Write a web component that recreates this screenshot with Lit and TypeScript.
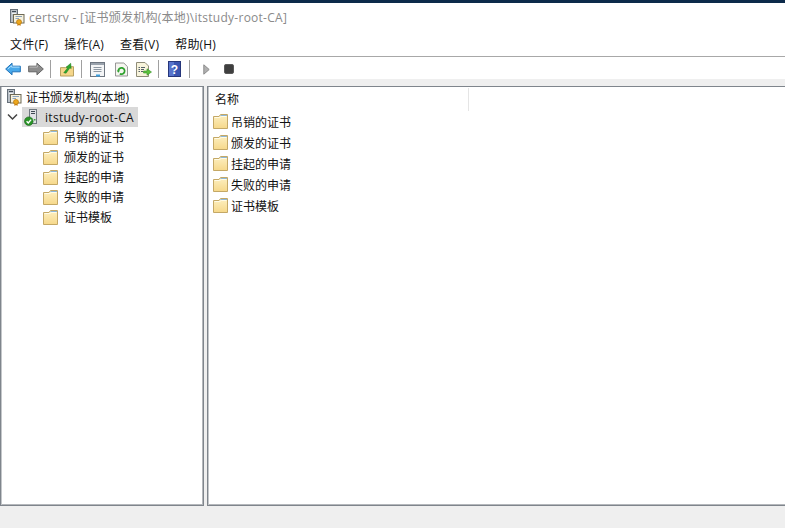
import { LitElement, html, css } from "lit";
import { customElement } from "lit/decorators.js";

const folder = html`<svg class="ic" width="15" height="15" viewBox="0 0 15 15">
  <defs><linearGradient id="fg" x1="0" y1="0" x2="0" y2="1"><stop offset="0" stop-color="#fdf0c2"/><stop offset="1" stop-color="#f6d88a"/></linearGradient></defs>
  <path d="M.5 2.5V14.5H14.5V.5H7.5L6 2.5Z" fill="url(#fg)" stroke="#c4a866"/>
  <path d="M7.5 1.5H14" stroke="#8fb8d8"/>
  <path d="M1.5 3.5H6.8L8.2 2.5H13.5" fill="none" stroke="#fffbe6"/>
</svg>`;

const cert = html`<svg class="ic" width="16" height="17" viewBox="0 0 16 17">
  <rect x="1.5" y="0.5" width="7" height="13" fill="#b9c0c7" stroke="#66707a"/>
  <rect x="3" y="2" width="4" height="1" fill="#3f4b56"/>
  <rect x="3" y="4" width="4" height="1" fill="#eef1f3"/>
  <rect x="4.5" y="5.5" width="10.5" height="8.5" fill="#f6f1de" stroke="#6e6a56"/>
  <path d="M6.5 7.5H13M6.5 9.5H10" stroke="#8aa3bb"/>
  <path d="M8.6 14.5l-.2 2.4 1.6-1 1.6 1-.2-2.4" fill="#c67a0c"/>
  <circle cx="10" cy="13" r="2.5" fill="#eda81e" stroke="#b87408" stroke-width=".7"/>
</svg>`;

const server = html`<svg class="ic" width="16" height="17" viewBox="0 0 16 17">
  <rect x="5.5" y="0.5" width="7" height="14" fill="#e0e3e6" stroke="#6f7880"/>
  <rect x="7" y="2" width="4" height="1" fill="#3f4a54"/>
  <rect x="7" y="4" width="4" height="1" fill="#3f4a54"/>
  <rect x="10" y="10" width="1.5" height="1.5" fill="#3da63d"/>
  <circle cx="4.8" cy="12.2" r="4.3" fill="#2a9428" stroke="#1a641a" stroke-width=".6"/>
  <path d="M2.6 12.2l1.7 1.8 2.8-3.4" fill="none" stroke="#fff" stroke-width="1.4"/>
</svg>`;

const tb = {
  back: html`<svg width="16" height="14" viewBox="0 0 17 14"><path d="M.7 7 7.5.8V4H16.3V10H7.5V13.2Z" fill="#48a8ea" stroke="#1b6eb4"/><path d="M3 7 7 3.5V5H15.5" fill="none" stroke="#b4e2ff"/></svg>`,
  fwd: html`<svg width="16" height="14" viewBox="0 0 17 14"><path d="M16.3 7 9.5.8V4H.7V10H9.5V13.2Z" fill="#8d8d8d" stroke="#5e5e5e"/><path d="M1.5 5H10V3" fill="none" stroke="#bdbdbd"/></svg>`,
  up: html`<svg width="14" height="15" viewBox="0 0 15 15"><path d="M.5 5.5H6L7 4.5H14.5V14.5H.5Z" fill="#f5d68a" stroke="#b39a58"/><path d="M4 11 8 6l-1.5-.8L11.5.8 12 6.5 10.5 5.8 6.5 11.5Z" fill="#2fa62f" stroke="#1c7a1c" stroke-width=".5"/></svg>`,
  panel: html`<svg width="15" height="15" viewBox="0 0 15 15"><rect x=".5" y=".5" width="14" height="14" fill="#f4f5f6" stroke="#6e7680"/><rect x="1" y="1" width="13" height="2" fill="#9aa3ad"/><path d="M3.5 5.5H11.5M3.5 7.5H11.5M3.5 9.5H11.5" stroke="#8d98a3"/><rect x="6" y="12.5" width="4" height="2" fill="#3da0e0"/></svg>`,
  refresh: html`<svg width="13" height="15" viewBox="0 0 14 15"><path d="M.5.5H9.5L13.5 4.5V14.5H.5Z" fill="#f6f6f0" stroke="#8a8a8a"/><path d="M3.6 9a3.4 3.4 0 1 1 1.6 3" fill="none" stroke="#2ea12e" stroke-width="1.8"/><path d="M1.8 8.5h3.6L3.6 11Z" fill="#2ea12e"/></svg>`,
  export: html`<svg width="16" height="15" viewBox="0 0 16 15"><path d="M.5.5H9L12.5 4V14.5H.5Z" fill="#f8f4dc" stroke="#8f8c78"/><path d="M2.5 5.5H4M5 5.5H9M2.5 7.5H4M5 7.5H8M2.5 9.5H4M5 9.5H7" stroke="#55606a"/><path d="M7.5 9H11V6.8L15.5 10 11 13.2V11H7.5Z" fill="#5cc23c" stroke="#3b922a" stroke-width=".6"/></svg>`,
  help: html`<svg width="13" height="16" viewBox="0 0 13 16"><rect x=".5" y=".5" width="12" height="15" fill="#3a55b0" stroke="#26367a"/><rect x="1" y="1" width="5" height="14" fill="#5874cc"/><text x="6.5" y="12.5" text-anchor="middle" font-family="Liberation Sans" font-size="12" font-weight="700" fill="#fff">?</text></svg>`,
  play: html`<svg width="7" height="11" viewBox="0 0 7 11"><path d="M.8.8 6.2 5.5.8 10.2Z" fill="#b0b0b0" stroke="#8c8c8c"/></svg>`,
  stop: html`<svg width="10" height="10" viewBox="0 0 10 10"><rect x=".5" y=".5" width="9" height="9" rx="1.4" fill="#3f3f3f" stroke="#5a5a5a"/></svg>`,
};

const items = ["吊销的证书", "颁发的证书", "挂起的申请", "失败的申请", "证书模板"];
const menus = ["文件(F)", "操作(A)", "查看(V)", "帮助(H)"];

@customElement("app-root")
export class AppRoot extends LitElement {
  static styles = css`
    :host {
      display: flex;
      flex-direction: column;
      width: 785px;
      height: 528px;
      overflow: hidden;
      background: #efefef;
      font-family: "Open Sans", "Noto Sans CJK SC", sans-serif;
      font-size: 12px;
      color: #111;
    }
    .ic { display: block; flex: none; }
    .accent { height: 3px; background: #0c2a4a; flex: none; }
    .title {
      height: 29px; flex: none; background: #fff; display: flex; align-items: center;
      gap: 4px; padding-left: 9px; color: #8a8a8a; line-height: 16px; white-space: nowrap;
      letter-spacing: 0.26px;
    }
    .menu {
      height: 24px; flex: none; background: #fff; display: flex; align-items: center;
      padding-left: 10px; gap: 16px; border-bottom: 1px solid #a8a8a8; letter-spacing: 0.2px;
    }
    .toolbar {
      height: 22px; flex: none; background: #fff; display: flex; align-items: center; padding-left: 5px;
    }
    .toolbar svg { display: block; flex: none; margin-top: 2px; }
    .sep { width: 1px; height: 18px; margin-top: 1px; background: #a0a0a0; flex: none; }
    .s6 { width: 6px; flex: none; }
    .s7 { width: 7px; flex: none; }
    .s8 { width: 8px; flex: none; }
    .s9 { width: 9px; flex: none; }
    .s10 { width: 10px; flex: none; }
    .s13 { width: 13px; flex: none; }
    .s14 { width: 14px; flex: none; }
    .gapbar { height: 7px; flex: none; background: #efefef; }
    .panes { height: 420px; flex: none; display: flex; gap: 3px; }
    .pane {
      background: #fff; border: 1px solid #7f858c; box-sizing: border-box; padding: 0 1px 1px;
    }
    .left { width: 204px; box-shadow: inset 1px 0 0 #c4c7ca, inset -1px -1px 0 #b4b7bb; }
    .right { flex: 1; border-right: 0; box-shadow: inset 1px 0 0 #c4c7ca, inset 0 -1px 0 #b4b7bb; }
    .treeroot { display: flex; align-items: center; height: 20px; padding-left: 4px; gap: 4px; }
    .ca { display: flex; align-items: center; height: 20px; padding-left: 4px; }
    .chev { width: 16px; flex: none; display: block; }
    .casel { display: flex; align-items: center; height: 20px; background: #d9d9d9; padding: 0 4px 0 2px; gap: 5px; letter-spacing: 0.3px; }
    .node { display: flex; align-items: center; height: 20px; padding-left: 41px; gap: 6px; }
    .head { height: 24px; display: flex; align-items: center; }
    .head span { width: 260px; padding-left: 6px; box-sizing: border-box; height: 23px; line-height: 23px; border-right: 1px solid #e5e5e5; }
    .row { display: flex; align-items: center; height: 21px; padding-left: 4px; gap: 3px; }
  `;

  render() {
    return html`
      <div class="accent"></div>
      <div class="title">${cert}<span>certsrv - [证书颁发机构(本地)\\itstudy-root-CA]</span></div>
      <div class="menu">${menus.map((m) => html`<span>${m}</span>`)}</div>
      <div class="toolbar">
        ${tb.back}<span class="s7"></span>${tb.fwd}<span class="s6"></span><span class="sep"></span>
        <span class="s9"></span>${tb.up}<span class="s7"></span><span class="sep"></span>
        <span class="s8"></span>${tb.panel}<span class="s10"></span>${tb.refresh}<span class="s8"></span>${tb.export}<span class="s6"></span><span class="sep"></span>
        <span class="s9"></span>${tb.help}<span class="s8"></span><span class="sep"></span>
        <span class="s13"></span>${tb.play}<span class="s14"></span>${tb.stop}
      </div>
      <div class="gapbar"></div>
      <div class="panes">
        <div class="pane left">
          <div class="treeroot">${cert}<span>证书颁发机构(本地)</span></div>
          <div class="ca">
            <svg class="chev" width="16" height="10" viewBox="0 0 16 10"><path d="M2 2.5 6.5 7 11 2.5" fill="none" stroke="#444" stroke-width="1.5"/></svg>
            <div class="casel">${server}<span>itstudy-root-CA</span></div>
          </div>
          ${items.map((t) => html`<div class="node">${folder}<span>${t}</span></div>`)}
        </div>
        <div class="pane right">
          <div class="head"><span>名称</span></div>
          ${items.map((t) => html`<div class="row">${folder}<span>${t}</span></div>`)}
        </div>
      </div>
    `;
  }
}
